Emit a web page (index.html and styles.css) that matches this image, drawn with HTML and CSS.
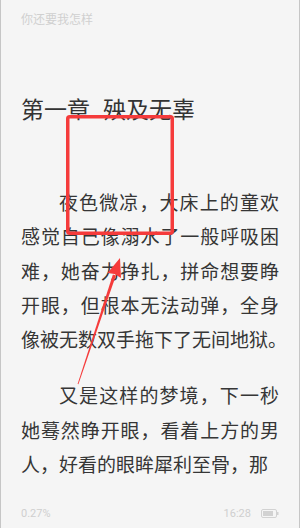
FILE: index.html
```html
<!DOCTYPE html>
<html lang="zh">
<head>
<meta charset="utf-8">
<link rel="stylesheet" href="styles.css">
</head>
<body>
<div class="page">
  <div class="header">你还要我怎样</div>
  <h1 class="title">第一章<span class="gap"></span>殃及无辜</h1>
  <div class="content">
    <p class="para">夜色微凉，大床上的童欢感觉自己像溺水了一般呼吸困难，她奋力挣扎，拼命想要睁开眼，但根本无法动弹，全身像被无数双手拖下了无间地狱<span class="halt">。</span></p>
    <p class="para">又是这样的梦境，下一秒她蓦然睁开眼，看着上方的男人，好看的眼眸犀利至骨，那</p>
  </div>
  <div class="footer">
    <span class="progress">0.27%</span>
    <span class="status">
      <span class="time">16:28</span>
      <svg class="battery" width="18" height="9" viewBox="0 0 18 9">
        <rect x="0.5" y="0.5" width="15" height="8" rx="1.5" fill="none" stroke="#d2d2d2" stroke-width="1"/>
        <rect x="2" y="2" width="10" height="5" fill="#d2d2d2"/>
        <rect x="16" y="3" width="1.5" height="3" fill="#d2d2d2"/>
      </svg>
    </span>
  </div>
  <svg class="annot" width="300" height="528" viewBox="0 0 300 528">
    <rect x="67.75" y="116.75" width="104.5" height="116.5" rx="2" fill="none" stroke="#f53b3b" stroke-width="3.5"/>
    <polygon points="115.9,275.4 112.9,274.4 77.6,384 78.4,384.2" fill="#f53b3b"/>
    <polygon points="120,258 121,278 114.5,274 107.5,273" fill="#f53b3b"/>
  </svg>
</div>
</body>
</html>
```
FILE: styles.css
```css
* { box-sizing: border-box; }
html, body {
  margin: 0;
  padding: 0;
  background: #f5f5f5;
}
.page {
  position: relative;
  width: 300px;
  height: 528px;
  overflow: hidden;
  background: #f5f5f5;
  border-left: 1px solid #c6c6c6;
  border-right: 1px solid #c6c6c6;
  display: flex;
  flex-direction: column;
  font-family: "Noto Sans CJK SC", "Noto Sans", sans-serif;
}
.header {
  flex: none;
  padding: 11px 0 0 20px;
  font-size: 12px;
  line-height: 16px;
  color: #d0d0d0;
}
.title {
  flex: none;
  margin: 66px 0 0 20px;
  font-size: 23px;
  line-height: 30px;
  font-weight: normal;
  color: #333;
}
.gap {
  display: inline-block;
  width: 13px;
}
.content {
  flex: 1;
  min-height: 0;
  overflow: hidden;
  margin-top: 62px;
  padding: 0 20px 0 20px;
}
.para {
  margin: 0 0 22px 0;
  font-size: 19px;
  line-height: 34.3px;
  text-indent: 2em;
  color: #363636;
  text-align: justify;
}
.halt {
  font-feature-settings: "halt" 1;
}
.footer {
  flex: none;
  height: 30px;
  padding: 0 20px 0 20px;
  display: flex;
  justify-content: space-between;
  align-items: center;
  font-family: Roboto, "Noto Sans", sans-serif;
  font-size: 11px;
  color: #cfcfcf;
}
.status {
  display: flex;
  align-items: center;
  gap: 10px;
}
.battery { display: block; }
.annot {
  position: absolute;
  left: -1px;
  top: 0;
  pointer-events: none;
}
```
